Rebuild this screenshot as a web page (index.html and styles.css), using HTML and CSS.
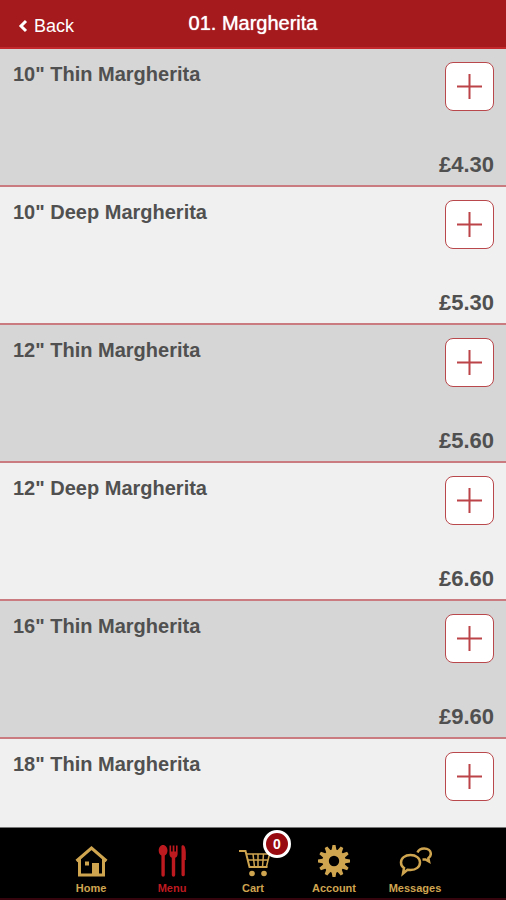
FILE: index.html
```html
<!DOCTYPE html>
<html lang="en">
<head>
<meta charset="utf-8">
<meta name="viewport" content="width=device-width, initial-scale=1">
<title>01. Margherita</title>
<link rel="stylesheet" href="styles.css">
</head>
<body>
<header class="bar">
  <a class="back" href="#">
    <svg class="chevron" viewBox="0 0 10 14" aria-hidden="true"><path d="M8 2L3 7l5 5"/></svg>
    <span>Back</span>
  </a>
  <h1 class="title">01. Margherita</h1>
</header>
<main class="content">
  <ul class="items">
    <li class="item">
      <h2 class="name">10" Thin Margherita</h2>
      <div class="side">
        <button class="add" type="button" aria-label="Add"><svg viewBox="0 0 25 25"><path d="M12.500 0v25M0 12.500h25"/></svg></button>
        <span class="price">£4.30</span>
      </div>
    </li>
    <li class="item">
      <h2 class="name">10" Deep Margherita</h2>
      <div class="side">
        <button class="add" type="button" aria-label="Add"><svg viewBox="0 0 25 25"><path d="M12.500 0v25M0 12.500h25"/></svg></button>
        <span class="price">£5.30</span>
      </div>
    </li>
    <li class="item">
      <h2 class="name">12" Thin Margherita</h2>
      <div class="side">
        <button class="add" type="button" aria-label="Add"><svg viewBox="0 0 25 25"><path d="M12.500 0v25M0 12.500h25"/></svg></button>
        <span class="price">£5.60</span>
      </div>
    </li>
    <li class="item">
      <h2 class="name">12" Deep Margherita</h2>
      <div class="side">
        <button class="add" type="button" aria-label="Add"><svg viewBox="0 0 25 25"><path d="M12.500 0v25M0 12.500h25"/></svg></button>
        <span class="price">£6.60</span>
      </div>
    </li>
    <li class="item">
      <h2 class="name">16" Thin Margherita</h2>
      <div class="side">
        <button class="add" type="button" aria-label="Add"><svg viewBox="0 0 25 25"><path d="M12.500 0v25M0 12.500h25"/></svg></button>
        <span class="price">£9.60</span>
      </div>
    </li>
    <li class="item">
      <h2 class="name">18" Thin Margherita</h2>
      <div class="side">
        <button class="add" type="button" aria-label="Add"><svg viewBox="0 0 25 25"><path d="M12.500 0v25M0 12.500h25"/></svg></button>
      </div>
    </li>
  </ul>
</main>
<nav class="tabs">
  <a class="tab" href="#">
    <svg class="icon" viewBox="0 0 34 34" aria-hidden="true">
      <path class="line" d="M2.500 17L17.500 4L32.500 17M5.500 15V31H29.500V15"/>
      <path class="fill" d="M18 19h7v12h-7zM11 17.500h4v4h-4z"/>
    </svg>
    <span>Home</span>
  </a>
  <a class="tab active" href="#">
    <svg class="icon" viewBox="0 0 34 34" aria-hidden="true">
      <path class="fill" d="M8 1c-2.600 0-4.300 2.700-4.300 5.500 0 2.500 1.200 4.300 2.700 5V31a1.700 1.700 0 0 0 3.400 0V11.500c1.500-.7 2.700-2.500 2.700-5C12.500 3.700 10.600 1 8 1z"/>
      <path class="fill" d="M14.500 1.500h1.600v6h1.600v-6h1.700v6H21v-6h1.600V10c0 2-1 3.200-2.400 3.700V31a1.700 1.700 0 0 1-3.400 0V13.700C15.500 13.200 14.500 12 14.500 10z"/>
      <path class="fill" d="M26.500 2.500c0-1 1-1.500 1.800-1.200 1.600.6 2.500 3.600 2.500 7.200v7.500H29.800V31a1.700 1.700 0 0 1-3.300 0z"/>
    </svg>
    <span>Menu</span>
  </a>
  <a class="tab" href="#">
    <span class="iconbox">
      <svg class="icon" viewBox="0 0 34 34" aria-hidden="true">
        <path class="cart" d="M3 7h6.500l4 16H31.500"/>
        <path class="thin" d="M10 10H33.500L30.500 22.500M11.500 16H32M17 10l1.500 13M22 10v13M27.500 10l-1 13"/>
        <circle class="fill" cx="16" cy="29.500" r="2.800"/>
        <circle class="fill" cx="28" cy="29.500" r="2.800"/>
      </svg>
      <span class="badge">0</span>
    </span>
    <span>Cart</span>
  </a>
  <a class="tab" href="#">
    <svg class="icon" viewBox="-17 -17 34 34" aria-hidden="true">
      <g class="fill">
        <path id="teeth" d="M-2.600-10L-1.500-16H1.500L2.600-10zM-2.600 10L-1.500 16H1.500L2.600 10z"/>
        <use href="#teeth" transform="rotate(30)"/>
        <use href="#teeth" transform="rotate(60)"/>
        <use href="#teeth" transform="rotate(90)"/>
        <use href="#teeth" transform="rotate(120)"/>
        <use href="#teeth" transform="rotate(150)"/>
        <circle r="11.500"/>
      </g>
      <circle class="hole" r="5.200"/>
    </svg>
    <span>Account</span>
  </a>
  <a class="tab" href="#">
    <svg class="icon" viewBox="0 0 34 34" aria-hidden="true">
      <path class="bubble" d="M12.500 11C18 11 22 14.200 22 18.500S18 26 12.500 26L9.500 25.700 5 29.500 6 24C4 22.800 3 20.800 3 18.500 3 14.200 7 11 12.500 11z"/>
      <path class="bubble" d="M19.500 8.500C20.500 6 23 4.500 26.200 4.500 30 4.500 32.800 6.800 32.800 9.800 32.800 11.600 31.800 13.200 30.300 14.200L31 17.500 27.500 15.500H24.500"/>
    </svg>
    <span>Messages</span>
  </a>
</nav>
</body>
</html>
```
FILE: styles.css
```css
* { box-sizing: border-box; }

body {
  margin: 0;
  height: 100vh;
  display: flex;
  flex-direction: column;
  background: #f0f0f0;
  color: #505050;
  font-family: "Liberation Sans", Arial, sans-serif;
}

a { color: inherit; text-decoration: none; }

.bar {
  flex: none;
  display: grid;
  grid-template-columns: 1fr auto 1fr;
  align-items: center;
  padding: 11px 18px;
  border-bottom: 2px solid #c2282c;
  background: #a51a1d;
  color: #fff;
}

.back {
  display: flex;
  align-items: center;
  gap: 6px;
  padding-top: 4px;
  font-size: 18px;
  line-height: 20px;
}

.chevron {
  width: 10px;
  height: 14px;
  fill: none;
  stroke: #fff;
  stroke-width: 3;
}

.title {
  margin: 0;
  font-size: 20px;
  line-height: 25px;
  font-weight: 400;
  text-shadow: 0 0 1px #fff;
}

.content {
  flex: 1;
  min-height: 0;
  overflow: hidden;
}

.items { margin: 0; padding: 0; list-style: none; }

.item {
  display: flex;
  justify-content: space-between;
  min-height: 138px;
  padding: 13px 12px 7px 13px;
  border-bottom: 2px solid #c97b7f;
  background: #f0f0f0;
}

.item:nth-child(odd) { background: #d6d6d6; }

.name {
  margin: 0;
  font-size: 20px;
  line-height: 24px;
  font-weight: 700;
}

.side {
  display: flex;
  flex-direction: column;
  justify-content: space-between;
  align-items: flex-end;
}

.add {
  display: grid;
  place-items: center;
  width: 49px;
  height: 49px;
  padding: 0;
  border: 1px solid #b9484c;
  border-radius: 8px;
  background: #fff;
}

.add svg {
  width: 25px;
  height: 25px;
  stroke: #bc4347;
  stroke-width: 2;
}

.price {
  font-size: 22px;
  line-height: 26px;
  font-weight: 700;
}

.tabs {
  flex: none;
  display: flex;
  padding: 16px 10% 3px;
  border-top: 1px solid #777;
  border-bottom: 2px solid #35040c;
  background: #000;
  color: #cfa550;
}

.tab {
  flex: 1;
  display: flex;
  flex-direction: column;
  align-items: center;
  gap: 4px;
  font-size: 11px;
  line-height: 13px;
  font-weight: 700;
}

.active { color: #bd1a20; }

.icon { display: block; width: 34px; height: 34px; }
.iconbox { position: relative; }

.line, .thin, .cart, .bubble { fill: none; stroke: currentColor; stroke-width: 3; }
.thin { stroke-width: 1.500; }
.cart { stroke-width: 2; }
.bubble { stroke-width: 2.500; }
.fill { fill: currentColor; }
.hole { fill: #000; }

.badge {
  position: absolute;
  top: -14px;
  right: -21px;
  width: 28px;
  height: 28px;
  border: 3px solid #fff;
  border-radius: 50%;
  background: #980b10;
  color: #fff;
  font-size: 14px;
  line-height: 22px;
  text-align: center;
}
```
